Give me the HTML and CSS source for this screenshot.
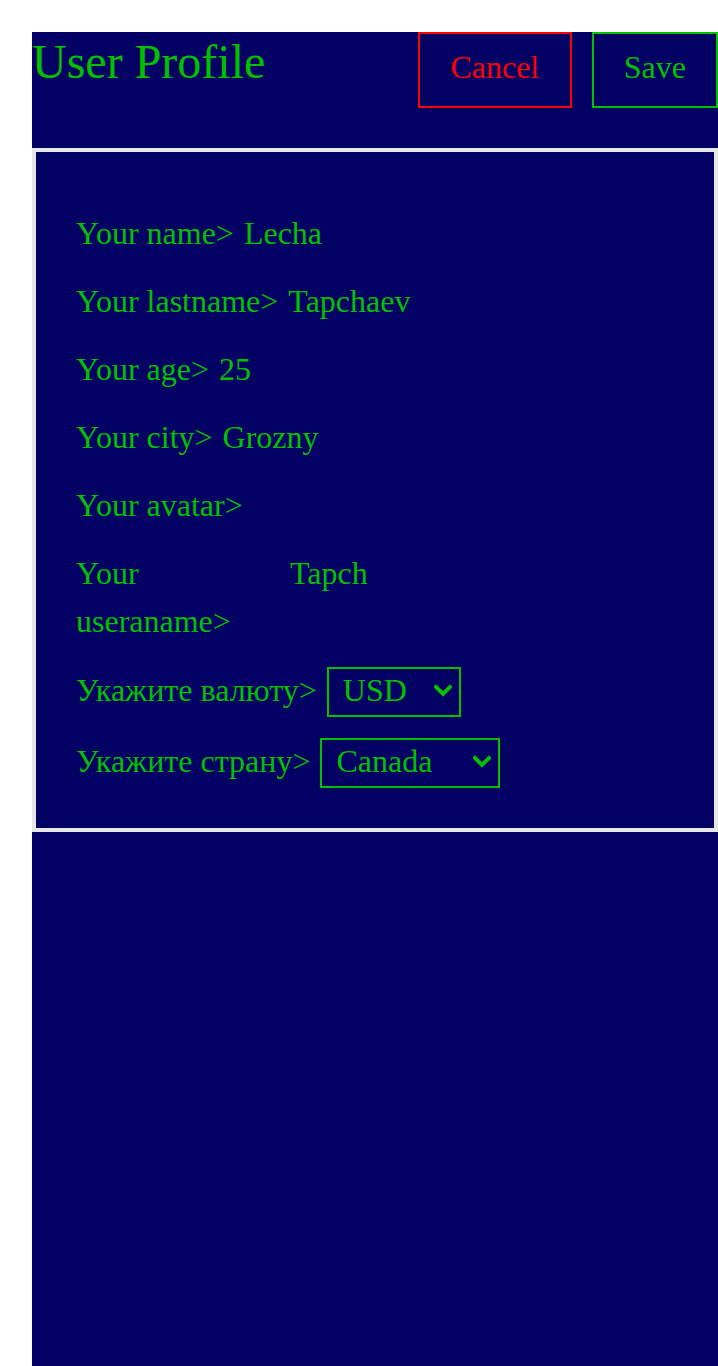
FILE: index.html
```html
<!DOCTYPE html>
<html lang="ru">
<head>
<meta charset="utf-8">
<title>User Profile</title>
<link rel="stylesheet" href="styles.css">
</head>
<body>
<div class="page">
  <header class="header">
    <h1 class="title">User Profile</h1>
    <div class="actions">
      <button class="btn btn-cancel">Cancel</button>
      <button class="btn btn-save">Save</button>
    </div>
  </header>
  <section class="card">
    <div class="row"><span class="label">Your name&gt;</span><span class="value">Lecha</span></div>
    <div class="row"><span class="label">Your lastname&gt;</span><span class="value">Tapchaev</span></div>
    <div class="row"><span class="label">Your age&gt;</span><span class="value">25</span></div>
    <div class="row"><span class="label">Your city&gt;</span><span class="value">Grozny</span></div>
    <div class="row"><span class="label">Your avatar&gt;</span><span class="value"></span></div>
    <div class="row"><span class="label label-narrow">Your useraname&gt;</span><span class="value">Tapch</span></div>
    <div class="row row-select row-currency"><span class="label">Укажите валюту&gt;</span>
      <span class="select-wrap">
        <select class="select select-currency"><option>USD</option><option>EUR</option><option>RUB</option></select>
        <svg class="chevron" width="18" height="13" viewBox="0 0 18 13"><path d="M2 3 L9 10 L16 3" fill="none" stroke="#00c000" stroke-width="4" stroke-linecap="square"/></svg>
      </span>
    </div>
    <div class="row row-select"><span class="label">Укажите страну&gt;</span>
      <span class="select-wrap">
        <select class="select select-country"><option>Canada</option><option>Russia</option><option>USA</option></select>
        <svg class="chevron" width="18" height="13" viewBox="0 0 18 13"><path d="M2 3 L9 10 L16 3" fill="none" stroke="#00c000" stroke-width="4" stroke-linecap="square"/></svg>
      </span>
    </div>
  </section>
</div>
</body>
</html>
```

FILE: styles.css
```css
html, body {
  margin: 0;
  padding: 0;
  background: #ffffff;
}

body {
  font-family: "Liberation Serif", "Times New Roman", serif;
  color: #00c000;
}

.page {
  margin: 32px 0 0 32px;
  background: #020062;
  min-height: calc(100vh - 32px);
}

.header {
  display: flex;
  justify-content: space-between;
  align-items: flex-start;
  height: 116px;
}

.title {
  margin: 0;
  font-size: 48px;
  font-weight: normal;
  line-height: 60px;
  color: #00c000;
}

.actions {
  display: flex;
  gap: 20px;
}

.btn {
  font-family: "Liberation Serif", "Times New Roman", serif;
  font-size: 32px;
  background: #020062;
  padding: 0 30px 6px;
  height: 76px;
  line-height: 62px;
  cursor: pointer;
}

.btn-cancel {
  color: #ff0000;
  border: 2px solid #ff0000;
  width: 154px;
  padding: 0 0 6px;
}

.btn-save {
  color: #00c000;
  border: 2px solid #00c000;
}

.card {
  border: 4px solid #e6e6e6;
  padding: 57px 40px 40px;
  display: flex;
  flex-direction: column;
  gap: 20px;
}

.row {
  display: flex;
  align-items: baseline;
  gap: 10px;
  font-size: 32px;
  line-height: 48px;
}

.label-narrow {
  width: 204px;
}

.row-select {
  align-items: baseline;
  gap: 10px;
}

.row-currency {
  margin-top: 1px;
}

.select-wrap {
  position: relative;
  display: inline-block;
}

.select {
  -webkit-appearance: none;
  appearance: none;
  display: block;
  font-family: "Liberation Serif", "Times New Roman", serif;
  font-size: 32px;
  color: #00c000;
  background: #020062;
  border: 2px solid #00c000;
  border-radius: 0;
  height: 50px;
  padding: 0 30px 3px 14px;
  line-height: 43px;
}

.select-currency {
  width: 134px;
}

.select-country {
  width: 180px;
}

.chevron {
  position: absolute;
  right: 9px;
  top: 17px;
  pointer-events: none;
}
```
